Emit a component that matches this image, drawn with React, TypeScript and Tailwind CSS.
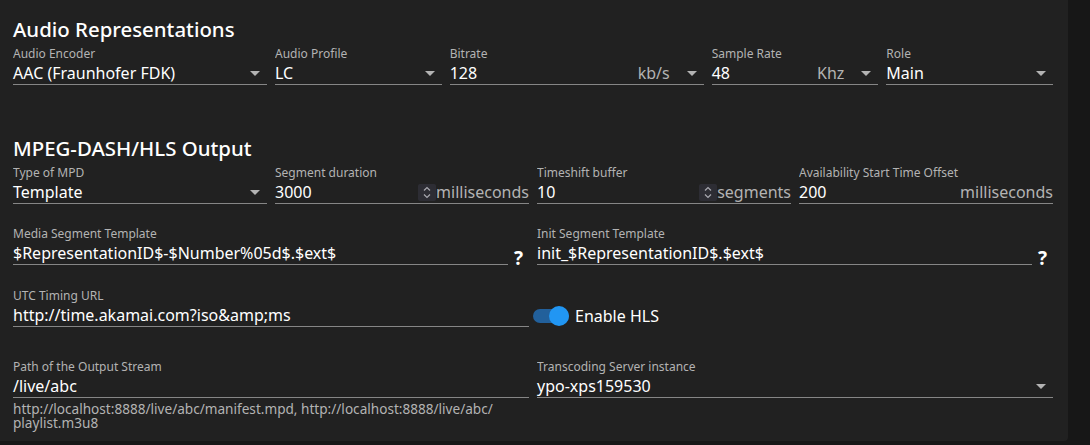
import React from "react";

const font = "font-['Noto_Sans',sans-serif]";

function Field({
  label,
  className,
  children,
}: {
  label: string;
  className?: string;
  children: React.ReactNode;
}) {
  return (
    <div className={"flex min-w-0 flex-col " + (className ?? "")}>
      <div className="h-4 truncate text-xs leading-4 text-[#b3b3b3]">{label}</div>
      <div className="flex h-[23px] items-center border-b border-[#868686] text-base leading-[22px] text-white">
        {children}
      </div>
    </div>
  );
}

function MenuDown() {
  return (
    <svg viewBox="0 0 24 24" className="h-6 w-6 shrink-0 fill-[#b3b3b3]">
      <path d="M7 10l5 5 5-5z" />
    </svg>
  );
}

function Spinner() {
  return (
    <span className="flex h-[17px] w-[18px] shrink-0 items-center justify-center rounded-[2px] bg-[#2d2d34]">
      <svg viewBox="0 0 18 17" className="h-[17px] w-[18px]" fill="none" stroke="#a9a9b0" strokeWidth="1.2">
        <path d="M6 6.5l3-3 3 3" />
        <path d="M6 10.5l3 3 3-3" />
      </svg>
    </span>
  );
}

function Help() {
  return (
    <div className="flex w-[21px] shrink-0 translate-y-[3px] items-end justify-center text-[19px] font-bold leading-5 text-white">
      ?
    </div>
  );
}

export default function App() {
  return (
    <div className={"flex min-h-[445px] w-full bg-[#171717] " + font}>
      <div className="w-[1068px] self-start rounded-br-[4px] bg-[#212121] pb-[11px] pl-[13px] pr-[15px] pt-[15px]">
        <h2 className="h-7 text-[20.4px] font-medium leading-7 text-white">Audio Representations</h2>

        <div className="mt-[3px] grid grid-cols-12 gap-x-2">
          <Field label="Audio Encoder" className="col-span-3">
            <span className="flex-1">AAC (Fraunhofer FDK)</span>
            <MenuDown />
          </Field>
          <Field label="Audio Profile" className="col-span-2">
            <span className="flex-1">LC</span>
            <MenuDown />
          </Field>
          <Field label="Bitrate" className="col-span-3">
            <span className="flex-1">128</span>
            <span className="mr-[10px] text-[#b3b3b3]">kb/s</span>
            <MenuDown />
          </Field>
          <Field label="Sample Rate" className="col-span-2">
            <span className="flex-1">48</span>
            <span className="mr-[10px] text-[#b3b3b3]">Khz</span>
            <MenuDown />
          </Field>
          <Field label="Role" className="col-span-2">
            <span className="flex-1">Main</span>
            <MenuDown />
          </Field>
        </div>

        <h2 className="mt-[49px] h-7 text-[20.4px] font-medium leading-7 text-white">MPEG-DASH/HLS Output</h2>

        <div className="mt-[3px] grid grid-cols-12 gap-x-2">
          <Field label="Type of MPD" className="col-span-3">
            <span className="flex-1">Template</span>
            <MenuDown />
          </Field>
          <Field label="Segment duration" className="col-span-3">
            <span className="flex-1">3000</span>
            <Spinner />
            <span className="text-[#b3b3b3]">milliseconds</span>
          </Field>
          <Field label="Timeshift buffer" className="col-span-3">
            <span className="flex-1">10</span>
            <Spinner />
            <span className="text-[#b3b3b3]">segments</span>
          </Field>
          <Field label="Availability Start Time Offset" className="col-span-3">
            <span className="flex-1">200</span>
            <span className="text-[#b3b3b3]">milliseconds</span>
          </Field>
        </div>

        <div className="mt-[22px] grid grid-cols-12 gap-x-2">
          <div className="col-span-6 flex">
            <Field label="Media Segment Template" className="flex-1">
              <span className="flex-1">$RepresentationID$-$Number%05d$.$ext$</span>
            </Field>
            <Help />
          </div>
          <div className="col-span-6 flex">
            <Field label="Init Segment Template" className="flex-1">
              <span className="flex-1">init_$RepresentationID$.$ext$</span>
            </Field>
            <Help />
          </div>
        </div>

        <div className="mt-[23px] grid grid-cols-12 gap-x-2">
          <Field label="UTC Timing URL" className="col-span-6">
            <span className="flex-1">http://time.akamai.com?iso&amp;amp;ms</span>
          </Field>
          <div className="col-span-6 flex items-end">
            <div className="-ml-1 flex h-[23px] items-center">
              <div className="relative h-[14px] w-9 rounded-full bg-[#22609b]">
                <span className="absolute -top-[3px] right-0 h-5 w-5 rounded-full bg-[#2196f3]" />
              </div>
              <span className="ml-[6px] text-base leading-[22px] text-white">Enable HLS</span>
            </div>
          </div>
        </div>

        <div className="mt-[32px] grid grid-cols-12 gap-x-2">
          <div className="col-span-6">
            <Field label="Path of the Output Stream">
              <span className="flex-1">/live/abc</span>
            </Field>
            <p className="mt-[4px] text-[13.6px] leading-[14px] text-[#b3b3b3]">
              http://localhost:8888/live/abc/manifest.mpd, http://localhost:8888/live/abc/
              <br />
              playlist.m3u8
            </p>
          </div>
          <Field label="Transcoding Server instance" className="col-span-6 self-start">
            <span className="flex-1">ypo-xps159530</span>
            <MenuDown />
          </Field>
        </div>
      </div>
    </div>
  );
}
